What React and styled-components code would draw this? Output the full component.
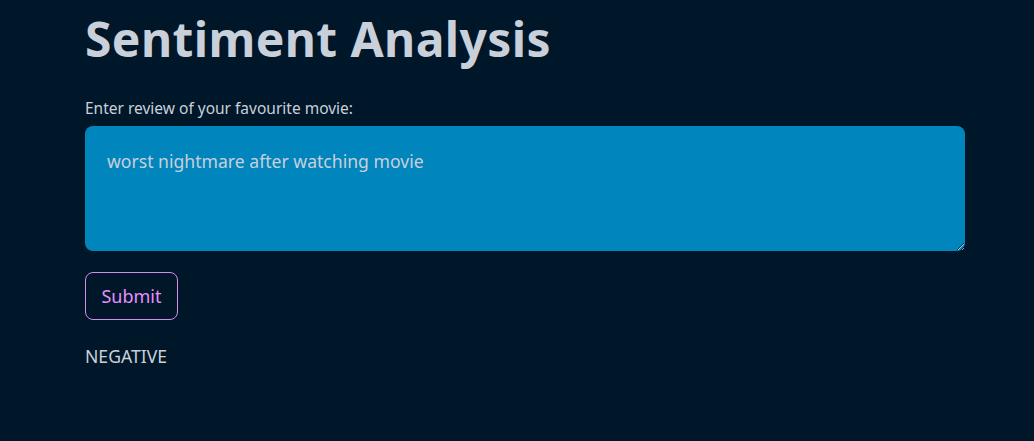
import React from "react";
import styled, { createGlobalStyle } from "styled-components";

const Global = createGlobalStyle`
  html, body { margin: 0; padding: 0; background: #001629; }
  body { font-family: "Noto Sans", "Open Sans", sans-serif; color: #c9d0da; }
`;

const Page = styled.main`
  min-height: 441px;
  box-sizing: border-box;
  padding: 6px 69px 0 85px;
  display: flex;
  flex-direction: column;
  background: #001629;
`;

const Title = styled.h1`
  margin: 0;
  font-size: 48px;
  font-weight: 700;
  letter-spacing: 0.4px;
  line-height: 66px;
  color: #c9d0da;
`;

const Label = styled.label`
  margin-top: 26px;
  font-size: 15.5px;
  line-height: 20px;
  color: #c9d0da;
`;

const Area = styled.textarea`
  margin-top: 8px;
  box-sizing: border-box;
  width: 880px;
  height: 125px;
  border: none;
  border-radius: 8px;
  background: #0085bd;
  color: #c9d0da;
  color-scheme: dark;
  font-family: inherit;
  font-size: 17.6px;
  line-height: 26px;
  padding: 22px 22px 18px;
  resize: vertical;
  outline: none;
`;

const Button = styled.button`
  margin-top: 21px;
  align-self: flex-start;
  box-sizing: border-box;
  width: 93px;
  height: 48px;
  border: 1px solid #d68ee8;
  border-radius: 8px;
  background: #001629;
  color: #e58fff;
  font-family: inherit;
  font-size: 18px;
`;

const Result = styled.p`
  margin: 24px 0 0;
  font-size: 17.6px;
  line-height: 24px;
  color: #c9d0da;
`;

export default function App() {
  return (
    <>
      <Global />
      <Page>
        <Title>Sentiment Analysis</Title>
        <Label>Enter review of your favourite movie:</Label>
        <Area defaultValue="worst nightmare after watching movie" />
        <Button>Submit</Button>
        <Result>NEGATIVE</Result>
      </Page>
    </>
  );
}
